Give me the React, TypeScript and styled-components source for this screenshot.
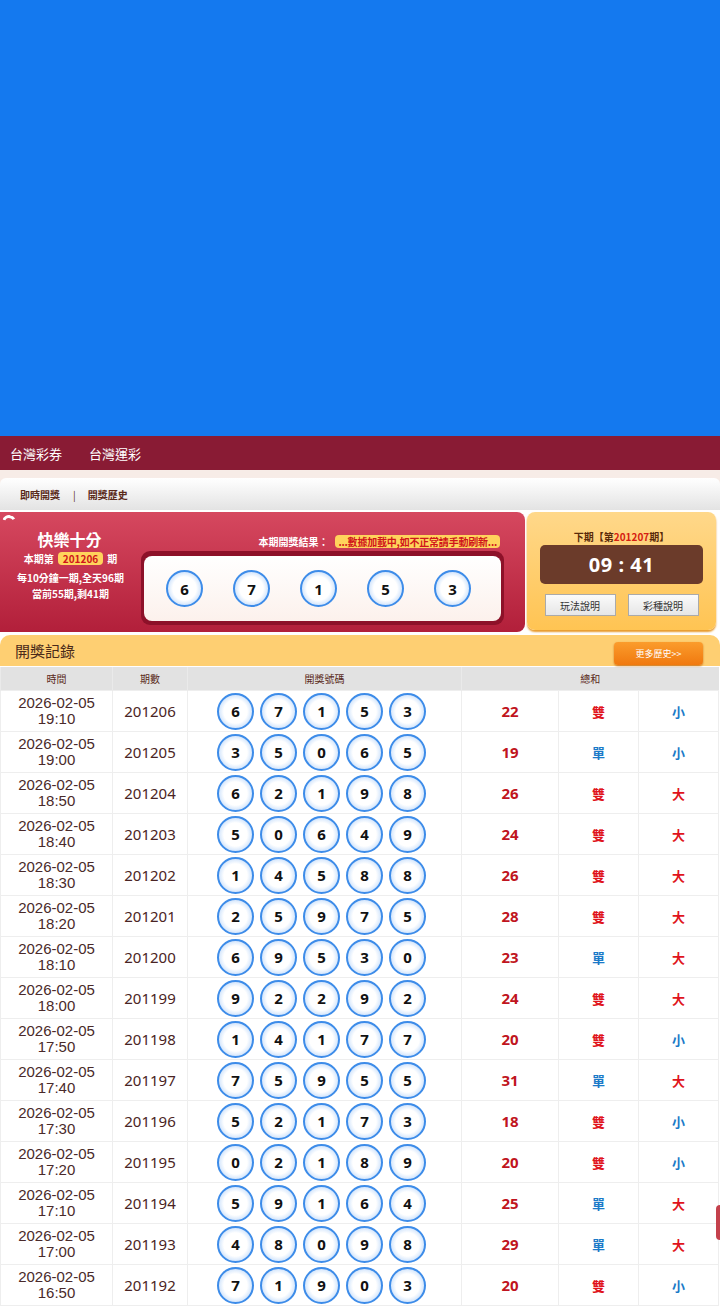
import React from 'react';
import styled, { createGlobalStyle } from 'styled-components';

const GlobalStyle = createGlobalStyle`
  html, body { margin: 0; padding: 0; background: #fff; }
  body { font-family: "Noto Sans", "Noto Sans CJK TC", sans-serif; }
`;

// 開獎資料
const rows: [string, string, number[]][] = [
  ['19:10', '201206', [6, 7, 1, 5, 3]],
  ['19:00', '201205', [3, 5, 0, 6, 5]],
  ['18:50', '201204', [6, 2, 1, 9, 8]],
  ['18:40', '201203', [5, 0, 6, 4, 9]],
  ['18:30', '201202', [1, 4, 5, 8, 8]],
  ['18:20', '201201', [2, 5, 9, 7, 5]],
  ['18:10', '201200', [6, 9, 5, 3, 0]],
  ['18:00', '201199', [9, 2, 2, 9, 2]],
  ['17:50', '201198', [1, 4, 1, 7, 7]],
  ['17:40', '201197', [7, 5, 9, 5, 5]],
  ['17:30', '201196', [5, 2, 1, 7, 3]],
  ['17:20', '201195', [0, 2, 1, 8, 9]],
  ['17:10', '201194', [5, 9, 1, 6, 4]],
  ['17:00', '201193', [4, 8, 0, 9, 8]],
  ['16:50', '201192', [7, 1, 9, 0, 3]],
];

const Page = styled.div`
  width: 720px;
  position: relative;
`;

const BlueTop = styled.div`
  height: 436px;
  background: #1479ef;
`;

const Nav = styled.div`
  height: 34px;
  background: #891b34;
  display: flex;
  align-items: center;
  gap: 27px;
  padding-left: 10px;
`;

const NavLink = styled.span`
  color: #fff;
  font-size: 13px;
  font-family: "Noto Sans CJK TC", sans-serif;
`;

const SubWrap = styled.div`
  background: #f7ece7;
  padding-top: 8px;
`;

const SubBar = styled.div`
  height: 32px;
  border-radius: 6px 6px 0 0;
  background: linear-gradient(#ffffff, #e3e3e3);
  display: flex;
  align-items: center;
  padding-left: 20px;
  font-size: 10px;
  font-weight: bold;
  color: #5a2a1a;
  font-family: "Noto Sans CJK TC", sans-serif;
`;

const Sep = styled.span`
  margin: 0 12px 0 13px;
  font-weight: normal;
`;

const Lottery = styled.div`
  display: flex;
  gap: 2px;
  padding: 2px 4px 2px 0;
  background: #fff;
`;

const RedCard = styled.div`
  position: relative;
  width: 525px;
  height: 120px;
  border-radius: 0 8px 8px 0;
  background: linear-gradient(#d6485f, #b21f3a);
  display: flex;
  font-family: "Noto Sans CJK TC", sans-serif;
`;

const Shine = styled.div`
  position: absolute;
  left: 2px;
  top: 3px;
  width: 14px;
  height: 14px;
  border-top: 3px solid #fff;
  border-left: 3px solid #fff;
  border-right: 3px solid transparent;
  border-bottom: 3px solid transparent;
  border-radius: 50%;
  box-sizing: border-box;
  transform: rotate(15deg);
  clip-path: inset(0 0 55% 0);
`;

const InfoCol = styled.div`
  width: 141px;
  display: flex;
  flex-direction: column;
  align-items: center;
  padding-top: 15px;
  color: #fff;
`;

const GameName = styled.div`
  font-size: 16px;
  font-weight: bold;
  line-height: 24px;
  margin-right: 2px;
`;

const InfoLine = styled.div<{ $gap?: number }>`
  font-size: 10px;
  font-weight: bold;
  line-height: 16px;
  margin-top: ${p => p.$gap ?? 0}px;
`;

const Badge = styled.span`
  display: inline-block;
  background: #ffd35c;
  color: #d0151a;
  border-radius: 4px;
  padding: 0 5px;
  margin: 0 4px;
  line-height: 13px;
`;

const ResultCol = styled.div`
  flex: 1;
  display: flex;
  flex-direction: column;
  padding-top: 22px;
  padding-right: 21px;
`;

const ResultHead = styled.div`
  display: flex;
  justify-content: flex-end;
  align-items: center;
  gap: 7px;
  font-size: 10px;
  font-weight: bold;
  color: #fff;
  height: 14px;
  padding-right: 4px;
`;

const Loading = styled.span`
  background: #ffd35c;
  color: #d0151a;
  border-radius: 4px;
  padding: 0 3px;
  line-height: 13px;
  white-space: nowrap;
  letter-spacing: -0.2px;
`;

const BallFrame = styled.div`
  margin-top: 3px;
  height: 74px;
  border-radius: 9px;
  background: #8d1129;
  padding: 5px 3px 4px 3px;
  box-sizing: border-box;
`;

const BallPanel = styled.div`
  height: 100%;
  border-radius: 8px;
  background: linear-gradient(#ffffff, #fcf1ec);
  display: flex;
  align-items: center;
  padding-left: 22px;
  gap: 30px;
`;

const Ball = styled.div`
  width: 37px;
  height: 37px;
  box-sizing: border-box;
  border-radius: 50%;
  border: 2px solid #3d8ce9;
  background: radial-gradient(circle at 50% 50%, #ffffff 50%, #d6e7fc 70%, #7fb0f0 100%);
  display: flex;
  align-items: center;
  justify-content: center;
  font-family: "Noto Sans", sans-serif;
  font-weight: bold;
  font-size: 15px;
  color: #111;
  flex-shrink: 0;
`;

const YellowCard = styled.div`
  flex: 1;
  height: 118px;
  border-radius: 8px;
  background: linear-gradient(#ffd88a, #ffc453);
  box-shadow: 0 2px 2px #e89a2a;
  display: flex;
  flex-direction: column;
  align-items: center;
  padding-top: 18px;
  box-sizing: border-box;
  font-family: "Noto Sans CJK TC", sans-serif;
`;

const NextLabel = styled.div`
  font-size: 10px;
  font-weight: bold;
  color: #5a2a0a;
  line-height: 14px;
`;

const Red = styled.span`
  color: #d52010;
`;

const Timer = styled.div`
  margin-top: 1px;
  width: 163px;
  height: 39px;
  border-radius: 5px;
  background: #6b3b2a;
  color: #fff;
  font-family: "Noto Sans", sans-serif;
  font-weight: bold;
  font-size: 20px;
  display: flex;
  align-items: center;
  justify-content: center;
  letter-spacing: 0.5px;
`;

const BtnRow = styled.div`
  display: flex;
  gap: 12px;
  margin-top: 10px;
`;

const GreyBtn = styled.div`
  width: 71px;
  height: 22px;
  box-sizing: border-box;
  border: 1px solid #aaa;
  background: linear-gradient(#fbfbfb, #e6e6e6);
  font-size: 10px;
  color: #333;
  display: flex;
  align-items: center;
  justify-content: center;
`;

const RecordHead = styled.div`
  margin-top: 1px;
  height: 31px;
  background: #fecf72;
  border-radius: 10px 10px 0 0;
  display: flex;
  align-items: center;
  justify-content: space-between;
  padding: 0 17px 0 15px;
  font-family: "Noto Sans CJK TC", sans-serif;
`;

const RecordTitle = styled.div`
  font-size: 15px;
  color: #4a2a1a;
`;

const MoreBtn = styled.div`
  width: 89px;
  height: 23px;
  margin-top: 6px;
  border-radius: 4px;
  background: linear-gradient(#fb9c2c, #f0790f);
  box-shadow: 0 1px 2px #c9731a;
  color: #fff;
  font-size: 9px;
  display: flex;
  align-items: center;
  justify-content: center;
`;

const Table = styled.table`
  width: 718px;
  border-collapse: collapse;
  table-layout: fixed;
  margin-top: 1px;
`;

const Th = styled.th`
  height: 23px;
  padding: 0;
  background: #e2e2e2;
  border-left: 1px solid #eaeaea;
  font-size: 10px;
  font-weight: normal;
  color: #5a2a1a;
  font-family: "Noto Sans CJK TC", sans-serif;
`;

const Td = styled.td`
  height: 40px;
  padding: 0;
  border: 1px solid #eeeeee;
  text-align: center;
  color: #4a2424;
  font-size: 15px;
`;

const TimeText = styled.div`
  line-height: 16px;
  font-size: 15px;
  font-family: "Liberation Sans", sans-serif;
  color: #4a2a2a;
`;

const BallRow = styled.div`
  display: flex;
  justify-content: center;
  gap: 6px;
  margin-left: -6px;
`;

const Sum = styled.span`
  color: #c01420;
  font-weight: bold;
  font-size: 15px;
`;

const Tag = styled.span<{ $red: boolean }>`
  color: ${p => (p.$red ? '#e0141c' : '#1a7ac8')};
  font-weight: bold;
  font-size: 13px;
  font-family: "Noto Sans CJK TC", sans-serif;
`;

const SideTab = styled.div`
  position: absolute;
  right: 0;
  top: 1205px;
  width: 4px;
  height: 35px;
  border-radius: 4px 0 0 4px;
  background: #c4414c;
`;

function App() {
  return (
    <>
      <GlobalStyle />
      <Page>
        <BlueTop />
        <Nav>
          <NavLink>台灣彩券</NavLink>
          <NavLink>台灣運彩</NavLink>
        </Nav>
        <SubWrap>
          <SubBar>
            即時開獎<Sep>|</Sep>開獎歷史
          </SubBar>
        </SubWrap>

        <Lottery>
          <RedCard>
            <Shine />
            <InfoCol>
              <GameName>快樂十分</GameName>
              <InfoLine>
                本期第<Badge>201206</Badge>期
              </InfoLine>
              <InfoLine $gap={3}>每10分鐘一期,全天96期</InfoLine>
              <InfoLine>當前55期,剩41期</InfoLine>
            </InfoCol>
            <ResultCol>
              <ResultHead>
                本期開獎結果：
                <Loading>...數據加載中,如不正常請手動刷新...</Loading>
              </ResultHead>
              <BallFrame>
                <BallPanel>
                  {[6, 7, 1, 5, 3].map((n, i) => (
                    <Ball key={i}>{n}</Ball>
                  ))}
                </BallPanel>
              </BallFrame>
            </ResultCol>
          </RedCard>
          <YellowCard>
            <NextLabel>
              下期【第<Red>201207</Red>期】
            </NextLabel>
            <Timer>09 : 41</Timer>
            <BtnRow>
              <GreyBtn>玩法說明</GreyBtn>
              <GreyBtn>彩種說明</GreyBtn>
            </BtnRow>
          </YellowCard>
        </Lottery>

        <RecordHead>
          <RecordTitle>開獎記錄</RecordTitle>
          <MoreBtn>更多歷史&gt;&gt;</MoreBtn>
        </RecordHead>

        <Table>
          <colgroup>
            <col style={{ width: 112 }} />
            <col style={{ width: 75 }} />
            <col style={{ width: 274 }} />
            <col style={{ width: 97 }} />
            <col style={{ width: 80 }} />
            <col style={{ width: 80 }} />
          </colgroup>
          <thead>
            <tr>
              <Th>時間</Th>
              <Th>期數</Th>
              <Th>開獎號碼</Th>
              <Th colSpan={3}>總和</Th>
            </tr>
          </thead>
          <tbody>
            {rows.map(([time, no, balls]) => {
              const sum = balls.reduce((a, b) => a + b, 0);
              const even = sum % 2 === 0;
              const big = sum >= 23;
              return (
                <tr key={no}>
                  <Td>
                    <TimeText>2026-02-05</TimeText>
                    <TimeText>{time}</TimeText>
                  </Td>
                  <Td>{no}</Td>
                  <Td>
                    <BallRow>
                      {balls.map((b, i) => (
                        <Ball key={i}>{b}</Ball>
                      ))}
                    </BallRow>
                  </Td>
                  <Td>
                    <Sum>{sum}</Sum>
                  </Td>
                  <Td>
                    <Tag $red={even}>{even ? '雙' : '單'}</Tag>
                  </Td>
                  <Td>
                    <Tag $red={big}>{big ? '大' : '小'}</Tag>
                  </Td>
                </tr>
              );
            })}
          </tbody>
        </Table>
        <SideTab />
      </Page>
    </>
  );
}

export default App;
